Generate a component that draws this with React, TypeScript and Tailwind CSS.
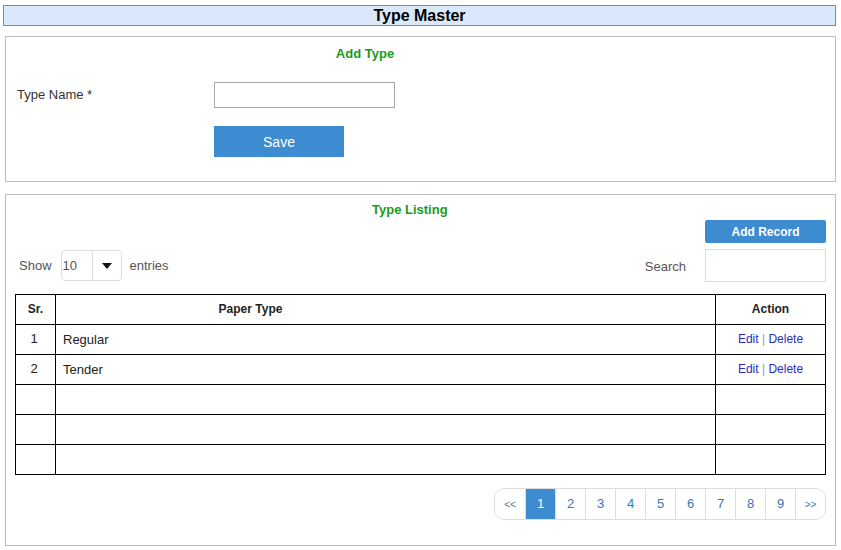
import React from "react";

const rows = [
  { sr: "1", name: "Regular", action: true },
  { sr: "2", name: "Tender", action: true },
  { sr: "", name: "", action: false },
  { sr: "", name: "", action: false },
  { sr: "", name: "", action: false },
];

const pages = ["<<", "1", "2", "3", "4", "5", "6", "7", "8", "9", ">>"];

export default function App() {
  return (
    <div
      className="w-[841px] h-[550px] bg-white overflow-hidden text-[#333]"
      style={{ fontFamily: '"Liberation Sans", Arial, sans-serif' }}
    >
      {/* Title bar */}
      <div className="mt-[5px] ml-[3px] w-[833px] h-[21px] border border-[#6c8ebf] bg-[#dae8fc] flex items-center justify-center">
        <span className="text-[16px] font-bold text-black leading-none">Type Master</span>
      </div>

      {/* Add Type panel */}
      <div className="mt-[10px] ml-[5px] w-[831px] h-[146px] border border-[#bdbdbd] flex flex-col">
        <div className="mt-[9px] ml-[208px] w-[302px] text-center text-[13px] font-bold text-[#1b9a1b] leading-[16px]">
          Add Type
        </div>
        <div className="mt-[20px] flex items-start">
          <div className="ml-[11px] w-[197px] pt-[6px] text-[13px] text-[#333] leading-[14px]">Type Name *</div>
          <div className="w-[181px] h-[26px] border border-[#a9a9a9] bg-white" />
        </div>
        <div className="mt-[18px] ml-[208px] w-[130px] h-[31px] bg-[#3d8bd0] flex items-center justify-center">
          <span className="text-white text-[14px] leading-none">Save</span>
        </div>
      </div>

      {/* Listing panel */}
      <div className="mt-[12px] ml-[5px] w-[831px] h-[352px] border border-[#bdbdbd] flex flex-col">
        <div className="mt-[7px] ml-[366px] text-[13px] font-bold text-[#1b9a1b] leading-[16px]">Type Listing</div>
        <div className="mt-[2px] self-end mr-[9px] w-[121px] h-[23px] rounded-[2px] bg-[#3d8bd0] flex items-center justify-center">
          <span className="text-white text-[12px] font-bold leading-none">Add Record</span>
        </div>
        <div className="mt-[6px] flex items-center h-[33px]">
          <span className="ml-[13px] text-[13px] text-[#555]">Show</span>
          <div className="ml-[9px] w-[61px] h-[31px] border border-[#ddd] rounded-[4px] flex items-stretch">
            <div className="w-[30px] flex items-center pl-[1px] text-[13px] text-[#555]">10</div>
            <div className="flex-1 border-l border-[#ddd] flex items-center justify-center">
              <svg width="10" height="6" viewBox="0 0 10 6">
                <path d="M0 0 L10 0 L5 6 Z" fill="#111" />
              </svg>
            </div>
          </div>
          <span className="ml-[8px] text-[13px] text-[#555]">entries</span>
          <span className="ml-auto mr-[19px] mt-[3px] text-[13px] text-[#555]">Search</span>
          <div className="mr-[9px] w-[121px] h-[33px] border border-[#ddd] bg-white" />
        </div>

        {/* Table */}
        <table className="mt-[12px] ml-[9px] w-[811px] border-collapse text-[12px] text-[#222]">
          <thead>
            <tr className="h-[30px]">
              <th className="w-[40px] border border-black font-bold text-center pb-[2px]">Sr.</th>
              <th className="border border-black font-bold text-center pr-[270px] pb-[2px]">Paper Type</th>
              <th className="w-[110px] border border-black font-bold text-center pb-[2px]">Action</th>
            </tr>
          </thead>
          <tbody>
            {rows.map((r, i) => (
              <tr key={i} className="h-[30px]">
                <td className="border border-black text-center align-top pt-[4px] pr-[3px] text-[13px]">{r.sr}</td>
                <td className="border border-black align-top pt-[5px] pl-[7px] text-[13px]">{r.name}</td>
                <td className="border border-black text-center align-top pt-[5px]">
                  {r.action && (
                    <span>
                      <span className="text-[#2a2ac6]">Edit</span>
                      <span className="text-[#999]"> | </span>
                      <span className="text-[#2a2ac6]">Delete</span>
                    </span>
                  )}
                </td>
              </tr>
            ))}
          </tbody>
        </table>

        {/* Pagination */}
        <div className="mt-[13px] self-end mr-[9px] flex h-[32px] border border-[#ddd] rounded-[10px] overflow-hidden">
          {pages.map((p, i) => (
            <div
              key={i}
              className={
                (i === 0 ? "" : "border-l border-[#ddd] ") +
                (p === "1" ? "bg-[#3d8bd0] text-white " : "text-[#337ab7] ") +
                (p === "<<" || p === ">>" ? "text-[10px] " : "text-[13px] ") +
                "w-[30px] flex items-center justify-center"
              }
            >
              {p}
            </div>
          ))}
        </div>
      </div>
    </div>
  );
}
